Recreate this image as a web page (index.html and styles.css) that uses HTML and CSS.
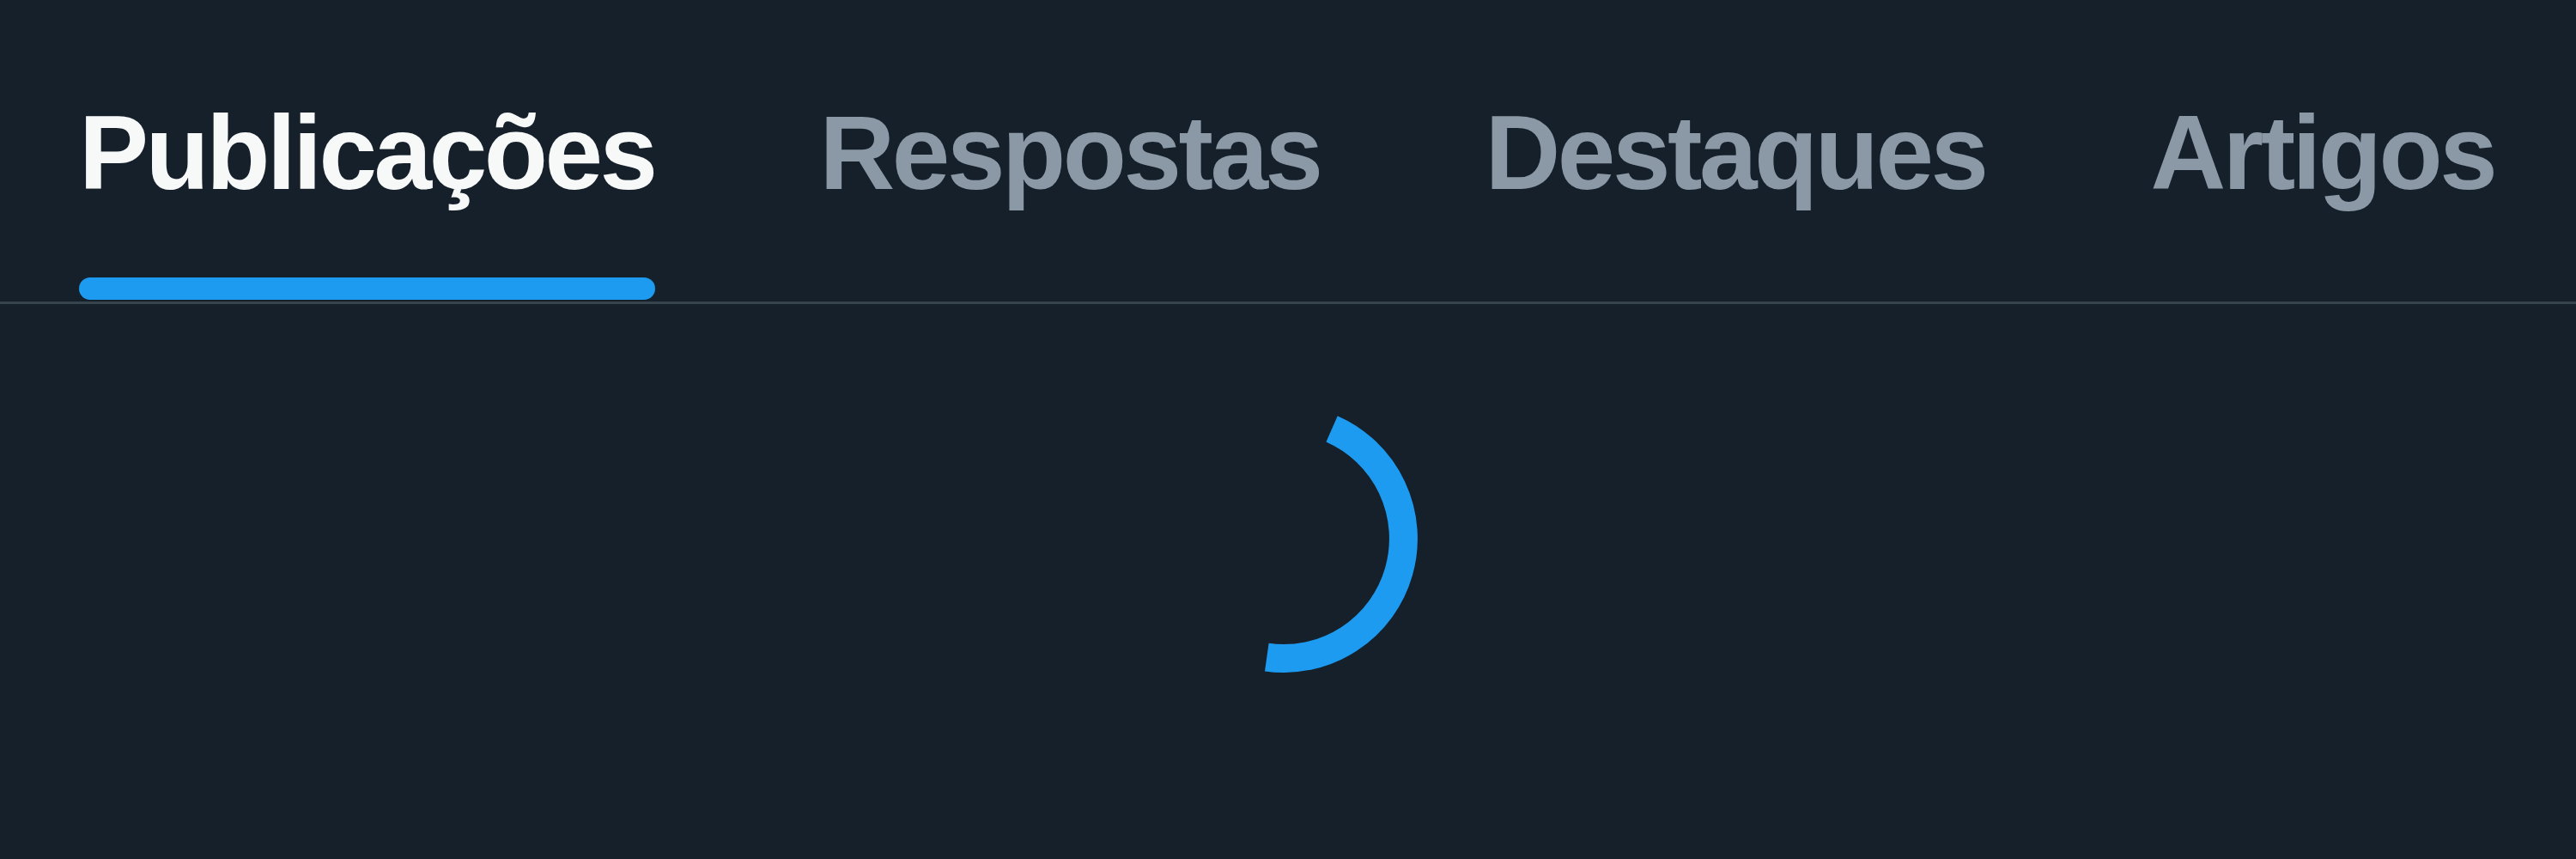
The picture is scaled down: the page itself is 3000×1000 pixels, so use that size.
FILE: index.html
```html
<!DOCTYPE html>
<html lang="pt">
<head>
<meta charset="utf-8">
<title>Perfil</title>
<link rel="stylesheet" href="styles.css">
</head>
<body>
<nav class="tabs">
  <div class="tab tab-first active"><span class="label">Publicações</span><span class="indicator"></span></div>
  <div class="tab"><span class="label">Respostas</span><span class="indicator"></span></div>
  <div class="tab"><span class="label">Destaques</span><span class="indicator"></span></div>
  <div class="tab"><span class="label">Artigos</span><span class="indicator"></span></div>
</nav>
<main class="feed">
  <svg class="spinner" width="312" height="312" viewBox="0 0 312 312" aria-label="Carregando">
    <path d="M212.1 28.3 A139.5 139.5 0 0 1 136.3 294.1" fill="none" stroke="#1d9bf0" stroke-width="33" stroke-linecap="butt"/>
  </svg>
</main>
</body>
</html>
```

FILE: styles.css
```css
html, body {
  margin: 0;
  padding: 0;
  background: #15202b;
}
body {
  width: 3000px;
  height: 1000px;
  overflow: hidden;
  font-family: "Liberation Sans", Arial, sans-serif;
}
.tabs {
  display: flex;
  border-bottom: 3px solid #38444d;
}
.tab {
  display: flex;
  flex-direction: column;
  padding: 110px 96px 0;
}
.tab-first {
  padding-left: 92px;
}
.label {
  font-size: 121.5px;
  line-height: 136px;
  font-weight: 700;
  letter-spacing: -3.5px;
  color: #8b98a5;
  white-space: nowrap;
}
.indicator {
  height: 26px;
  margin-top: 77px;
  margin-bottom: 2px;
  border-radius: 13px;
  background: transparent;
}
.active .label {
  color: #f7f9f9;
}
.active .indicator {
  background: #1d9bf0;
}
.feed {
  display: flex;
  justify-content: center;
  padding-top: 117px;
  padding-right: 10px;
}
.spinner {
  display: block;
}
```
